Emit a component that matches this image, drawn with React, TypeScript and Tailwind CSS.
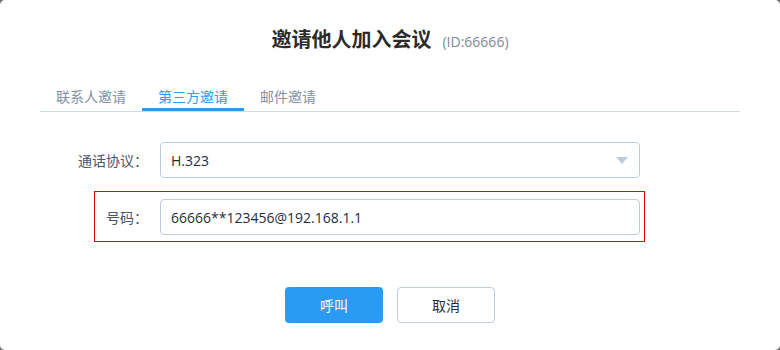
import React from "react";

export default function App() {
  const font = { fontFamily: '"Open Sans", "Noto Sans CJK SC", sans-serif' };
  return (
    <div className="w-[780px] h-[350px] bg-[#6f6f6f]" style={font}>
      <div className="w-full h-full bg-white rounded-[5px] flex flex-col">
        <div className="pt-[26px] flex items-baseline justify-center">
          <span className="text-[20px] leading-[28px] font-bold text-[#2b2b2b]">邀请他人加入会议</span>
          <span className="ml-[11px] text-[14px] leading-[28px] text-[#7d8a99]">(ID:66666)</span>
        </div>
        <div className="mt-[30px] mx-[40px] flex border-b border-[#d1dbe5]">
          <div className="px-[16px] h-[25px] leading-[22px] text-[14px] text-[#8391a5] border-b-[3px] border-transparent">联系人邀请</div>
          <div className="px-[16px] h-[25px] leading-[22px] text-[14px] text-[#2a9bf2] border-b-[3px] border-[#2a9bf2]">第三方邀请</div>
          <div className="px-[16px] h-[25px] leading-[22px] text-[14px] text-[#8391a5] border-b-[3px] border-transparent">邮件邀请</div>
        </div>
        <div className="mt-[22px] ml-[94px] w-[551px] flex items-center border border-transparent pt-[7px] pb-[6px]">
          <div className="w-[65px] shrink-0 flex justify-end pr-[12px]">
            <span className="shrink-0 whitespace-nowrap text-[14px] text-[#48576a]">通话协议：</span>
          </div>
          <div className="w-[480px] h-[36px] border border-[#bfcbd9] rounded-[4px] flex items-center justify-between pl-[10px] pr-[11px]">
            <span className="text-[14px] text-[#1f2d3d]">H.323</span>
            <svg width="12" height="7" viewBox="0 0 12 7">
              <path d="M0 0 L12 0 L6 7 Z" fill="#bfcbd9" />
            </svg>
          </div>
        </div>
        <div className="mt-[6px] ml-[94px] w-[551px] flex items-center border border-[#e60000] pt-[7px] pb-[6px]">
          <div className="w-[65px] shrink-0 flex justify-end pr-[12px]">
            <span className="shrink-0 whitespace-nowrap text-[14px] text-[#48576a]">号码：</span>
          </div>
          <div className="w-[480px] h-[36px] border border-[#bfcbd9] rounded-[4px] flex items-center pl-[10px]">
            <span className="text-[14px] text-[#1f2d3d]">66666**123456@192.168.1.1</span>
          </div>
        </div>
        <div className="mt-[45px] flex justify-center gap-[14px]">
          <div className="w-[98px] h-[36px] rounded-[4px] bg-[#2a9bf2] text-white text-[14px] flex items-center justify-center">呼叫</div>
          <div className="w-[98px] h-[36px] rounded-[4px] border border-[#bfcbd9] bg-white text-[#1f2d3d] text-[14px] flex items-center justify-center">取消</div>
        </div>
      </div>
    </div>
  );
}
